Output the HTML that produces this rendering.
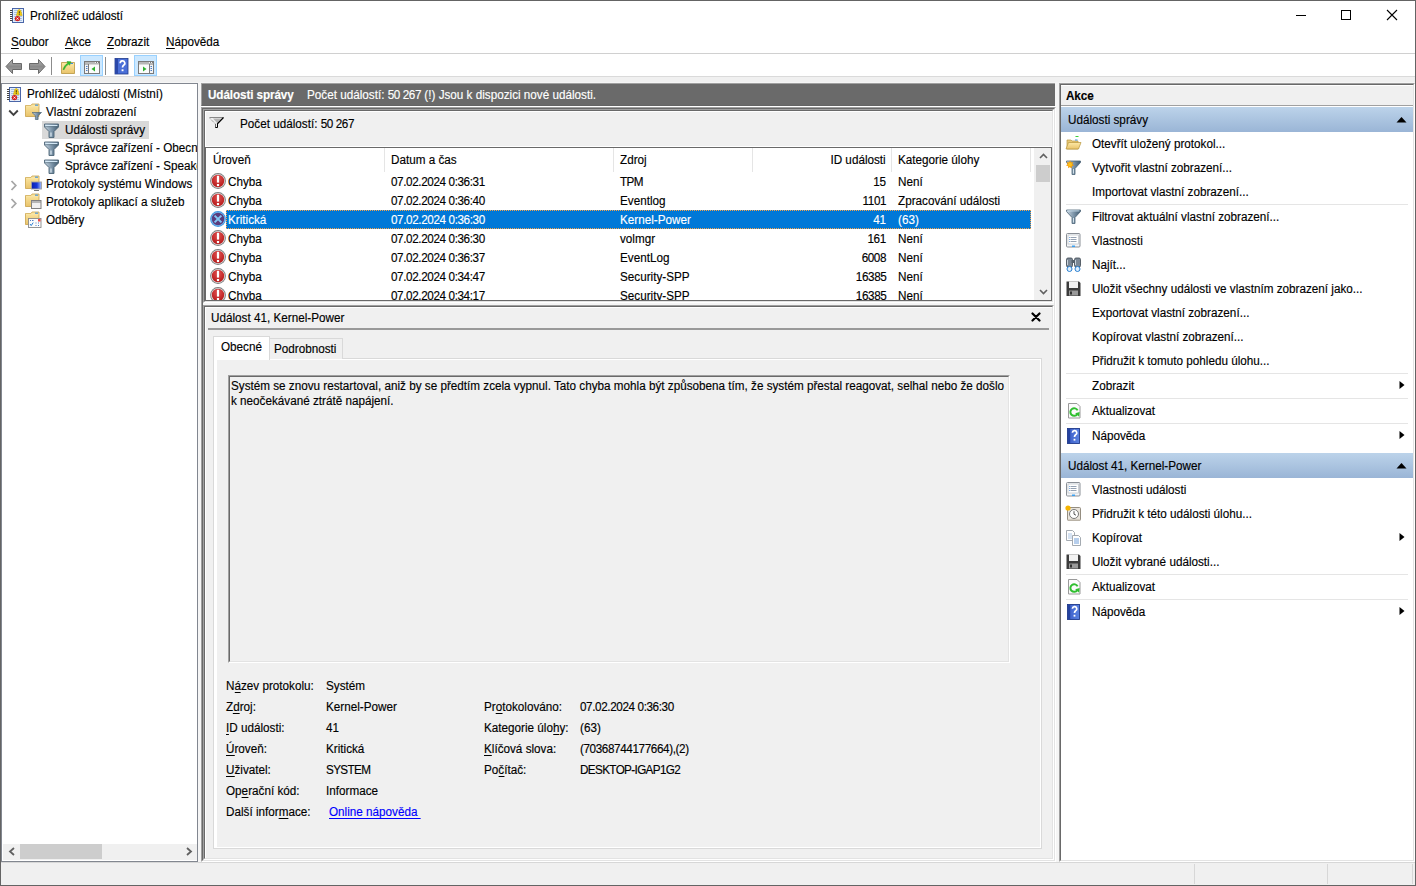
<!DOCTYPE html>
<html><head><meta charset="utf-8">
<style>
*{box-sizing:border-box}
html,body{margin:0;padding:0}
body{width:1416px;height:886px;position:relative;overflow:hidden;background:#fff;font-family:"Liberation Sans",sans-serif;font-size:12px;color:#000}
.a{position:absolute}
.t{position:absolute;white-space:nowrap;line-height:14px;-webkit-text-stroke:0.15px currentColor;transform:scaleX(0.975);transform-origin:0 0}
.t[style*="right:"]{transform-origin:100% 0}
.n{letter-spacing:-0.4px}
.u{letter-spacing:-0.65px}
.b{font-weight:bold;letter-spacing:-0.1px}
u{text-decoration:none;border-bottom:1px solid #000;display:inline-block;line-height:11px}
</style></head><body>
<svg width="0" height="0" style="position:absolute">
<defs>
<radialGradient id="gred" cx="50%" cy="30%" r="65%"><stop offset="0" stop-color="#e05050"/><stop offset="1" stop-color="#b81c1c"/></radialGradient>
<symbol id="ierr" viewBox="0 0 16 16"><circle cx="8" cy="8" r="7.9" fill="#7c7c7c"/><circle cx="8" cy="8" r="7" fill="#dcdcdc"/><circle cx="8" cy="8" r="6.2" fill="url(#gred)"/><rect x="6.9" y="2.8" width="2.2" height="6.8" fill="#fff"/><rect x="6.9" y="11" width="2.2" height="2.1" fill="#fff"/></symbol>
<symbol id="icrit" viewBox="0 0 16 16"><circle cx="8" cy="8" r="7.9" fill="#3f95e0"/><circle cx="8" cy="8" r="7" fill="#74b8ee"/><circle cx="8" cy="8" r="6.2" fill="#5a3c7c"/><path d="M4.6 4.6L11.4 11.4M11.4 4.6L4.6 11.4" stroke="#80c6f4" stroke-width="2"/></symbol>

<linearGradient id="gfold" x1="0" y1="0" x2="0" y2="1"><stop offset="0" stop-color="#fde9a6"/><stop offset="1" stop-color="#e9c36a"/></linearGradient>
<linearGradient id="gfun" x1="0" y1="0" x2="1" y2="0"><stop offset="0" stop-color="#c9d6e0"/><stop offset=".5" stop-color="#7f97ab"/><stop offset="1" stop-color="#3f5a70"/></linearGradient>
<symbol id="ifunnel" viewBox="0 0 15 15"><path d="M0.5 1H14.5V4L10 8.5V14.5H5V8.5L0.5 4Z" fill="url(#gfun)" stroke="#4d6577" stroke-width="0.9" stroke-linejoin="round"/><path d="M1.5 2.4H13.5" stroke="#d9ecfa" stroke-width="1.1"/><path d="M0.8 3.7H14.2" stroke="#5a7284" stroke-width="0.7"/><path d="M7 9.5V13.5" stroke="#eaf5fc" stroke-width="1.3" opacity=".8"/></symbol>
<symbol id="ifolder" viewBox="0 0 17 17"><path d="M0.5 2.5H6L7 1H14V13.5H0.5Z" fill="url(#gfold)" stroke="#c9a24a" stroke-width="0.8"/><path d="M1 3.3H13.5" stroke="#f9e6a8" stroke-width="0.8"/><rect x="10" y="1.6" width="3" height="1.1" fill="#3d8fe0"/></symbol>
<symbol id="ifoldfilt" viewBox="0 0 17 17"><use href="#ifolder"/><path d="M7 9.5h9.5l-3.4 3.2v3.8h-2.7v-3.8z" fill="url(#gfun)" stroke="#4d6577" stroke-width="0.7"/></symbol>
<symbol id="ifoldwin" viewBox="0 0 17 17"><defs><linearGradient id="gscr" x1="0" y1="0" x2="1" y2="0"><stop offset="0" stop-color="#0a1fb0"/><stop offset=".55" stop-color="#1838d8"/><stop offset="1" stop-color="#a8c4ff"/></linearGradient></defs><use href="#ifolder"/><rect x="6.5" y="7" width="10" height="7" fill="url(#gscr)" stroke="#a0a0a0" stroke-width="0.9"/><path d="M9 15.5h5" stroke="#777" stroke-width="1"/></symbol>
<symbol id="ifoldapp" viewBox="0 0 17 17"><use href="#ifolder"/><rect x="6.5" y="7.5" width="9.5" height="8" fill="#f0f0f0" stroke="#808080" stroke-width="1"/><path d="M6.5 9H16" stroke="#909090" stroke-width="1.2"/></symbol>
<symbol id="ifoldsub" viewBox="0 0 17 17"><use href="#ifolder"/><rect x="3.5" y="7.5" width="12.5" height="9" fill="#fbfbfb" stroke="#8a8a8a" stroke-width="0.9"/><rect x="13" y="8" width="2.5" height="2.5" fill="#f04848"/><path d="M5 13l1.2 1.6 2-3" stroke="#2a7fd4" stroke-width="1" fill="none"/><path d="M5 9.5h1M7 9.5h1.5M10.5 12h1M13 12h1M10.5 14.5h1M13 14.5h1" stroke="#3a6fc0" stroke-width="0.9"/></symbol>
<symbol id="ilog" viewBox="0 0 15 16"><rect x="2.5" y="0.5" width="11" height="14" fill="#e4eefa" stroke="#4a66a8" stroke-width="1"/><path d="M4 2.5h8M4 4.5h8M4 6.5h8M4 8.5h8M4 10.5h8M4 12.5h8" stroke="#a9c3e6" stroke-width="1"/><path d="M0 2.5h2.5M0 4.5h2.5M0 6.5h2.5M0 8.5h2.5M0 10.5h2.5M0 12.5h2.5" stroke="#444" stroke-width="1"/><path d="M9.3 1.5c-1.2 0-1.6 1.2-1.9 2.6l-1 3.4h5.8l-1-3.4c-0.3-1.4-0.7-2.6-1.9-2.6z" fill="#f2cc14" stroke="#c9a000" stroke-width="0.5"/><path d="M9.3 3.2v2.3M9.3 6.2v0.8" stroke="#222" stroke-width="0.9"/><circle cx="7.5" cy="10.6" r="2.7" fill="#d42020"/><path d="M6.5 9.6l2 2M8.5 9.6l-2 2" stroke="#fff" stroke-width="0.9"/></symbol>

<linearGradient id="gfun2" x1="0" y1="0" x2="1" y2="1"><stop offset="0" stop-color="#e6eef4"/><stop offset=".6" stop-color="#7f97ab"/><stop offset="1" stop-color="#3f5a70"/></linearGradient>
<symbol id="ifunnel2" viewBox="0 0 17 17"><path d="M1.5 1H15.5V2.5L10 8.5V14.5H7V8.5L1.5 2.5Z" fill="url(#gfun)" stroke="#4d6577" stroke-width="0.8" stroke-linejoin="round"/><path d="M2.5 1.9H14.5" stroke="#d9ecfa" stroke-width="0.9"/><path d="M8.5 9V13.5" stroke="#eaf5fc" stroke-width="1" opacity=".8"/></symbol>
<symbol id="ifunsun" viewBox="0 0 17 17"><path d="M1.5 1H15.5V2.5L10 8.5V14.5H7V8.5L1.5 2.5Z" fill="url(#gfun)" stroke="#4d6577" stroke-width="0.8" stroke-linejoin="round"/><path d="M8.5 9V13.5" stroke="#eaf5fc" stroke-width="1" opacity=".8"/><path d="M5 0.5L6 2.5L8.2 2L7.3 4L9 5.5L6.8 6L6.8 8.2L5 7L3.2 8.2L3.2 6L1 5.5L2.7 4L1.8 2L4 2.5Z" fill="#f59a00"/><circle cx="5" cy="4.4" r="2" fill="#ffc21a"/></symbol>
<symbol id="iopen" viewBox="0 0 17 17"><path d="M10.5 1.5h3" stroke="#3ad13a" stroke-width="1"/><path d="M2 5h4l1 1h6v8h-11z" fill="#e8c878" stroke="#b8963e" stroke-width="0.7"/><path d="M1 14l2.5-6.5h12.5l-2.5 6.5z" fill="url(#gfold)" stroke="#b8963e" stroke-width="0.7"/><rect x="10" y="4.5" width="2.5" height="1" fill="#3d8fe0"/></symbol>
<symbol id="iprops" viewBox="0 0 17 17"><rect x="1.5" y="1.5" width="13.5" height="13.5" rx="1" fill="#f4f6f8" stroke="#8a8f96" stroke-width="1"/><rect x="3" y="3" width="10.5" height="9" fill="#fff" stroke="#b0b6bd" stroke-width="0.6"/><path d="M5.5 5.5h6M5.5 7.5h6M5.5 9.5h6" stroke="#7a8aa0" stroke-width="0.8"/><path d="M4 5.5h0.8M4 7.5h0.8M4 9.5h0.8" stroke="#3a7fd0" stroke-width="0.8"/><rect x="7" y="13.5" width="3" height="1.5" fill="#3aa0f0"/></symbol>
<symbol id="ifind" viewBox="0 0 17 17"><rect x="1.5" y="2" width="6" height="9" rx="1.5" fill="#7b8794" stroke="#3d4650" stroke-width="0.8"/><rect x="9.5" y="2" width="6" height="9" rx="1.5" fill="#7b8794" stroke="#3d4650" stroke-width="0.8"/><rect x="6.5" y="4" width="4" height="3" fill="#55606b"/><circle cx="4.5" cy="13" r="2.5" fill="#dff0ff" stroke="#2a7fd0" stroke-width="1"/><circle cx="12.5" cy="13" r="2.5" fill="#dff0ff" stroke="#2a7fd0" stroke-width="1"/><path d="M2.5 4v5M10.5 4v5" stroke="#c9d2da" stroke-width="1"/></symbol>
<symbol id="isave" viewBox="0 0 17 17"><path d="M1.5 1.5h12.5l1.5 1.5v13h-14z" fill="#3c3c3c"/><rect x="4" y="1.5" width="9" height="6.5" fill="#f2f2f2"/><rect x="4" y="10.5" width="9" height="5" fill="#9a9a9a"/><rect x="5" y="11.5" width="2" height="3" fill="#333"/></symbol>
<symbol id="irefresh" viewBox="0 0 17 17"><path d="M3.5 1.5h8.5l3 3v11.5h-11.5z" fill="#fbfbfb" stroke="#9a9a9a" stroke-width="1"/><path d="M12.3 12.2A3.8 3.8 0 1 1 12.6 8.4" stroke="#2fbf2f" stroke-width="2" fill="none"/><path d="M10.2 11.2L14.2 14.8L14.6 10z" fill="#2fbf2f"/></symbol>
<symbol id="ihelp" viewBox="0 0 17 17"><defs><linearGradient id="ghelp" x1="0" y1="0" x2="1" y2="0"><stop offset="0" stop-color="#3a5cc8"/><stop offset="1" stop-color="#5a82e0"/></linearGradient></defs><rect x="2.5" y="1.5" width="12" height="15" fill="url(#ghelp)" stroke="#1f3a8a" stroke-width="0.9"/><rect x="3" y="2" width="2.2" height="14" fill="#2442a0"/><path d="M7.4 5.8a2.2 2.2 0 1 1 3.2 2c-0.9 0.6-1.1 1.1-1.1 2.3" stroke="#fff" stroke-width="1.7" fill="none"/><rect x="8.6" y="11.8" width="1.8" height="1.8" fill="#fff"/></symbol>
<symbol id="itask" viewBox="0 0 17 17"><rect x="2.5" y="2.5" width="13" height="13" rx="1" fill="#e9e4dc" stroke="#8a8275" stroke-width="0.9"/><circle cx="9" cy="9" r="4.5" fill="#fff" stroke="#6a6a6a" stroke-width="0.9"/><path d="M9 6.2v3l2 1" stroke="#444" stroke-width="0.9" fill="none"/><circle cx="3" cy="3" r="2.6" fill="#f5b400"/><rect x="3" y="14.5" width="12" height="1.5" fill="#b9b2a6"/></symbol>
<symbol id="icopy" viewBox="0 0 17 17"><path d="M1.5 1.5h6l2 2v8h-8z" fill="#fff" stroke="#9aa0a8" stroke-width="0.9"/><path d="M3 5h4M3 7h4M3 9h4" stroke="#8ab0dc" stroke-width="0.7"/><path d="M7.5 6.5h6l2 2v8h-8z" fill="#fff" stroke="#9aa0a8" stroke-width="0.9"/><path d="M9 10h5M9 12h5M9 14h5" stroke="#4a86d0" stroke-width="0.8"/></symbol>
</defs></svg>
<!-- window border -->
<div class="a" style="left:0;top:0;width:1416px;height:886px;border:1px solid #646464"></div>

<!-- title bar -->
<svg class="a" style="left:10px;top:8px" width="15" height="16"><use href="#ilog"/></svg>
<div class="t" style="left:30px;top:9px">Prohlížeč událostí</div>
<!-- window controls -->
<div class="a" style="left:1296px;top:15px;width:10px;height:1px;background:#000"></div>
<div class="a" style="left:1341px;top:10px;width:10px;height:10px;border:1px solid #000"></div>
<svg class="a" style="left:1386px;top:9px" width="12" height="12"><path d="M1 1L11 11M11 1L1 11" stroke="#000" stroke-width="1.1"/></svg>

<!-- menu -->
<div class="t" style="left:11px;top:35px"><u>S</u>oubor</div>
<div class="t" style="left:65px;top:35px"><u>A</u>kce</div>
<div class="t" style="left:107px;top:35px"><u>Z</u>obrazit</div>
<div class="t" style="left:166px;top:35px"><u>N</u>ápověda</div>
<div class="a" style="left:1px;top:53px;width:1414px;height:1px;background:#d0d0d0"></div>
<!-- toolbar -->
<div class="a" style="left:1px;top:76px;width:1414px;height:1px;background:#dadada"></div>
<div class="a" style="left:1px;top:77px;width:1414px;height:785px;background:#f0f0f0"></div>
<div class="a" style="left:1px;top:82px;width:1414px;height:780px;background:#f5f5f5"></div>

<!-- toolbar icons -->
<svg class="a" style="left:5px;top:58px" width="18" height="18"><defs><linearGradient id="garr" x1="0" y1="0" x2="0" y2="1"><stop offset="0" stop-color="#b8b8b8"/><stop offset=".5" stop-color="#8a8a8a"/><stop offset="1" stop-color="#a8a8a8"/></linearGradient></defs><path d="M1 8.5L7.5 1.5V5.5H16.5V11.5H7.5V15.5z" fill="url(#garr)" stroke="#6a6a6a" stroke-width="1" stroke-linejoin="round"/></svg>
<svg class="a" style="left:28px;top:58px" width="18" height="18"><path d="M17 8.5L10.5 1.5V5.5H1.5V11.5H10.5V15.5z" fill="url(#garr)" stroke="#6a6a6a" stroke-width="1" stroke-linejoin="round"/></svg>
<div class="a" style="left:51px;top:57px;width:1px;height:18px;background:#8c8c8c"></div>
<svg class="a" style="left:60px;top:58px" width="17" height="17"><path d="M1.5 4.5h13v11h-13z" fill="url(#gfold)" stroke="#b8963e" stroke-width="0.8"/><rect x="10.5" y="5" width="2.5" height="1" fill="#3d8fe0"/><path d="M3 11.5c1-3 2.5-5 5-6.5l-1-1.5 4 0.3-1.5 3.5-0.8-1.2c-2 1.2-3.5 3-4.5 5.5z" fill="#2ec42e" stroke="#1f9a1f" stroke-width="0.5"/></svg>
<div class="a" style="left:80px;top:55px;width:23px;height:21px;background:#cce8ff;border:1px solid #99d1ff"></div>
<svg class="a" style="left:83px;top:60px" width="17" height="15"><rect x="1.5" y="1.5" width="15" height="12" fill="#f4f4f4" stroke="#7a7a7a" stroke-width="1"/><path d="M1.5 4h15" stroke="#7a7a7a" stroke-width="1"/><path d="M2 2.5h10" stroke="#a8a8a8" stroke-width="0.8"/><rect x="13" y="2" width="1" height="1" fill="#7a7a7a"/><rect x="15" y="2" width="1" height="1" fill="#7a7a7a"/><path d="M5.5 4v9.5" stroke="#7a7a7a" stroke-width="1"/><path d="M3 6.5h1.5M3 8.5h1.5M3 10.5h1.5" stroke="#3a6fc0" stroke-width="0.9"/><rect x="6" y="4.5" width="10" height="8.5" fill="#fbfbfb"/><path d="M12 6.5v5l-3.5-2.5z" fill="#2fb12f"/></svg>
<div class="a" style="left:105px;top:57px;width:1px;height:18px;background:#8c8c8c"></div>
<svg class="a" style="left:114px;top:58px" width="15" height="17"><rect x="1" y="0.5" width="13" height="15.5" fill="#4a6fd8" stroke="#1f3a8a" stroke-width="0.8"/><rect x="1" y="0.5" width="3" height="15.5" fill="#2a47a8"/><path d="M6.2 5.2a2.3 2.3 0 1 1 3.4 2c-0.9 0.6-1.1 1.1-1.1 2.3" stroke="#fff" stroke-width="1.7" fill="none"/><rect x="7.6" y="11.3" width="1.9" height="1.9" fill="#fff"/></svg>
<div class="a" style="left:134px;top:55px;width:23px;height:21px;background:#cce8ff;border:1px solid #99d1ff"></div>
<svg class="a" style="left:137px;top:60px" width="17" height="15"><rect x="1.5" y="1.5" width="15" height="12" fill="#f4f4f4" stroke="#7a7a7a" stroke-width="1"/><path d="M1.5 4h15" stroke="#7a7a7a" stroke-width="1"/><path d="M2 2.5h10" stroke="#a8a8a8" stroke-width="0.8"/><rect x="13" y="2" width="1" height="1" fill="#7a7a7a"/><rect x="15" y="2" width="1" height="1" fill="#7a7a7a"/><rect x="2" y="4.5" width="10" height="8.5" fill="#fbfbfb"/><path d="M12.5 4v9.5" stroke="#7a7a7a" stroke-width="1"/><path d="M13.5 6.5h1.5M13.5 8.5h1.5M13.5 10.5h1.5" stroke="#3a6fc0" stroke-width="0.9"/><path d="M6 6.5v5l3.5-2.5z" fill="#2fb12f"/></svg>
<!-- status bar -->
<div class="a" style="left:1px;top:862px;width:1414px;height:23px;background:#f0f0f0;border-top:1px solid #d7d7d7"></div>
<div class="a" style="left:1194px;top:864px;width:1px;height:20px;background:#d7d7d7"></div>
<div class="a" style="left:1327px;top:864px;width:1px;height:20px;background:#d7d7d7"></div>
<div class="a" style="left:1412px;top:864px;width:1px;height:20px;background:#d7d7d7"></div>

<!-- LEFT PANEL -->
<div class="a" id="left" style="left:1px;top:83px;width:197px;height:779px;background:#fff;border:1px solid #828790;overflow:hidden">
<div class="a" style="left:-1px;top:-1px;width:196px;height:777px">
<svg class="a" style="left:6px;top:4px" width="15" height="16"><use href="#ilog"/></svg>
<div class="t" style="left:26px;top:4px">Prohlížeč událostí (Místní)</div>
<svg class="a" style="left:7px;top:26px" width="11" height="8"><path d="M1.2 1.5L5.5 5.8L9.8 1.5" stroke="#404040" stroke-width="1.9" fill="none"/></svg>
<svg class="a" style="left:24px;top:20px" width="17" height="17"><use href="#ifoldfilt"/></svg>
<div class="t" style="left:45px;top:22px">Vlastní zobrazení</div>
<div class="a" style="left:41px;top:38px;width:107px;height:18px;background:#d9d9d9"></div>
<svg class="a" style="left:43px;top:40px" width="15" height="15"><use href="#ifunnel"/></svg>
<div class="t" style="left:64px;top:40px">Události správy</div>
<svg class="a" style="left:43px;top:58px" width="15" height="15"><use href="#ifunnel"/></svg>
<div class="t" style="left:64px;top:58px">Správce zařízení - Obecný</div>
<svg class="a" style="left:43px;top:76px" width="15" height="15"><use href="#ifunnel"/></svg>
<div class="t" style="left:64px;top:76px">Správce zařízení - Speaker</div>
<svg class="a" style="left:9px;top:97px" width="7" height="11"><path d="M1.5 1L5.8 5.5L1.5 10" stroke="#a6a6a6" stroke-width="1.8" fill="none"/></svg>
<svg class="a" style="left:24px;top:92px" width="17" height="17"><use href="#ifoldwin"/></svg>
<div class="t" style="left:45px;top:94px">Protokoly systému Windows</div>
<svg class="a" style="left:9px;top:115px" width="7" height="11"><path d="M1.5 1L5.8 5.5L1.5 10" stroke="#a6a6a6" stroke-width="1.8" fill="none"/></svg>
<svg class="a" style="left:24px;top:110px" width="17" height="17"><use href="#ifoldapp"/></svg>
<div class="t" style="left:45px;top:112px">Protokoly aplikací a služeb</div>
<svg class="a" style="left:24px;top:128px" width="17" height="17"><use href="#ifoldsub"/></svg>
<div class="t" style="left:45px;top:130px">Odběry</div>
</div>
<!-- h scrollbar -->
<div class="a" style="left:1px;top:760px;width:194px;height:16px;background:#f0f0f0"></div>
<div class="a" style="left:18px;top:760px;width:82px;height:15px;background:#cdcdcd"></div>
<svg class="a" style="left:6px;top:763px" width="8" height="9"><path d="M6 1L2 4.5L6 8" stroke="#606060" stroke-width="1.8" fill="none"/></svg>
<svg class="a" style="left:183px;top:763px" width="8" height="9"><path d="M2 1L6 4.5L2 8" stroke="#606060" stroke-width="1.8" fill="none"/></svg>
</div>


<!-- MIDDLE PANEL -->
<div class="a" style="left:201px;top:83px;width:854px;height:23px;background:#6a6a6a;border-bottom:1px solid #646464;border-top:1px solid #a0a0a0;border-left:1px solid #a0a0a0"></div>
<div class="t b" style="left:208px;top:88px;color:#fff">Události správy</div>
<div class="t" style="left:307px;top:88px;color:#fff">Počet událostí: <span class="n">50 267</span> (!) Jsou k dispozici nové události.</div>
<div class="a" style="left:201px;top:106px;width:855px;height:1px;background:#fff"></div>
<!-- outer sunken frame -->
<div class="a" style="left:201px;top:107px;width:855px;height:755px;border-style:solid;border-width:1px;border-color:#a0a0a0 #fff #fff #a0a0a0">
 <div style="width:100%;height:100%;border-style:solid;border-width:1px;border-color:#696969 #e3e3e3 #e3e3e3 #696969"></div>
</div>
<!-- upper inner frame -->
<div class="a" style="left:203px;top:109px;width:851px;height:194px;border-style:solid;border-width:1px;border-color:#a0a0a0 #fff #fff #a0a0a0">
 <div style="width:100%;height:100%;border-style:solid;border-width:1px;border-color:#696969 #e3e3e3 #e3e3e3 #696969;background:#f0f0f0"></div>
</div>
<!-- filter strip highlight -->
<div class="a" style="left:205px;top:111px;width:847px;height:36px;border-style:solid;border-width:1px 0 1px 1px;border-color:#fff"></div>
<svg class="a" style="left:209px;top:116px" width="16" height="13"><path d="M4 2.5H12L8.2 7z" fill="#b5b5b5"/><path d="M0.5 1.5H14.5" stroke="#888" stroke-width="1"/><path d="M1 2.5L6.5 8" stroke="#777" stroke-width="1" stroke-dasharray="1 1"/><path d="M14.5 1.5L8.2 8" stroke="#000" stroke-width="1.2"/><path d="M6.5 8V11.5H8.5V8" stroke="#000" stroke-width="1" fill="none"/><path d="M6.5 8V11" stroke="#666" stroke-width="1"/></svg>
<div class="t" style="left:240px;top:117px">Počet událostí: <span class="n">50 267</span></div>
<!-- listview -->
<div class="a" id="lv" style="left:205px;top:147px;width:847px;height:154px;background:#fff;border:1px solid #696969;overflow:hidden"><div class="a" style="left:178px;top:0;width:1px;height:24px;background:#e5e5e5"></div>
<div class="a" style="left:407px;top:0;width:1px;height:24px;background:#e5e5e5"></div>
<div class="a" style="left:546px;top:0;width:1px;height:24px;background:#e5e5e5"></div>
<div class="a" style="left:685px;top:0;width:1px;height:24px;background:#e5e5e5"></div>
<div class="a" style="left:824px;top:0;width:1px;height:24px;background:#e5e5e5"></div>
<div class="t" style="left:7px;top:5px;">Úroveň</div>
<div class="t" style="left:185px;top:5px;">Datum a čas</div>
<div class="t" style="left:414px;top:5px;">Zdroj</div>
<div class="t" style="right:165px;top:5px">ID události</div>
<div class="t" style="left:692px;top:5px;">Kategorie úlohy</div>
<svg class="a" style="left:4px;top:25px" width="16" height="16"><use href="#ierr"/></svg>
<div class="t" style="left:22px;top:27px;">Chyba</div>
<div class="t" style="left:185px;top:27px;"><span class="n">07.02.2024 0:36:31</span></div>
<div class="t" style="left:414px;top:27px;"><span class="u">TPM</span></div>
<div class="t" style="right:165px;top:27px;"><span class="n">15</span></div>
<div class="t" style="left:692px;top:27px;">Není</div>
<svg class="a" style="left:4px;top:44px" width="16" height="16"><use href="#ierr"/></svg>
<div class="t" style="left:22px;top:46px;">Chyba</div>
<div class="t" style="left:185px;top:46px;"><span class="n">07.02.2024 0:36:40</span></div>
<div class="t" style="left:414px;top:46px;">Eventlog</div>
<div class="t" style="right:165px;top:46px;"><span class="n">1101</span></div>
<div class="t" style="left:692px;top:46px;">Zpracování události</div>
<div class="a" style="left:20px;top:62px;width:805px;height:19px;background:#0078d7;outline:1px dotted #f7a34a;outline-offset:-1px"></div>
<svg class="a" style="left:4px;top:63px" width="16" height="16"><use href="#icrit"/></svg>
<div class="t" style="left:22px;top:65px;color:#fff">Kritická</div>
<div class="t" style="left:185px;top:65px;color:#fff"><span class="n">07.02.2024 0:36:30</span></div>
<div class="t" style="left:414px;top:65px;color:#fff">Kernel-Power</div>
<div class="t" style="right:165px;top:65px;color:#fff"><span class="n">41</span></div>
<div class="t" style="left:692px;top:65px;color:#fff">(63)</div>
<svg class="a" style="left:4px;top:82px" width="16" height="16"><use href="#ierr"/></svg>
<div class="t" style="left:22px;top:84px;">Chyba</div>
<div class="t" style="left:185px;top:84px;"><span class="n">07.02.2024 0:36:30</span></div>
<div class="t" style="left:414px;top:84px;">volmgr</div>
<div class="t" style="right:165px;top:84px;"><span class="n">161</span></div>
<div class="t" style="left:692px;top:84px;">Není</div>
<svg class="a" style="left:4px;top:101px" width="16" height="16"><use href="#ierr"/></svg>
<div class="t" style="left:22px;top:103px;">Chyba</div>
<div class="t" style="left:185px;top:103px;"><span class="n">07.02.2024 0:36:37</span></div>
<div class="t" style="left:414px;top:103px;">EventLog</div>
<div class="t" style="right:165px;top:103px;"><span class="n">6008</span></div>
<div class="t" style="left:692px;top:103px;">Není</div>
<svg class="a" style="left:4px;top:120px" width="16" height="16"><use href="#ierr"/></svg>
<div class="t" style="left:22px;top:122px;">Chyba</div>
<div class="t" style="left:185px;top:122px;"><span class="n">07.02.2024 0:34:47</span></div>
<div class="t" style="left:414px;top:122px;">Security-SPP</div>
<div class="t" style="right:165px;top:122px;"><span class="n">16385</span></div>
<div class="t" style="left:692px;top:122px;">Není</div>
<svg class="a" style="left:4px;top:139px" width="16" height="16"><use href="#ierr"/></svg>
<div class="t" style="left:22px;top:141px;">Chyba</div>
<div class="t" style="left:185px;top:141px;"><span class="n">07.02.2024 0:34:17</span></div>
<div class="t" style="left:414px;top:141px;">Security-SPP</div>
<div class="t" style="right:165px;top:141px;"><span class="n">16385</span></div>
<div class="t" style="left:692px;top:141px;">Není</div>
<div class="a" style="left:828px;top:0;width:17px;height:152px;background:#f0f0f0"></div>
<div class="a" style="left:830px;top:17px;width:14px;height:17px;background:#cdcdcd"></div>
<svg class="a" style="left:833px;top:5px" width="9" height="6"><path d="M1 5L4.5 1.5L8 5" stroke="#606060" stroke-width="1.6" fill="none"/></svg>
<svg class="a" style="left:833px;top:141px" width="9" height="6"><path d="M1 1L4.5 4.5L8 1" stroke="#606060" stroke-width="1.6" fill="none"/></svg></div>
<!-- lower inner frame -->
<div class="a" style="left:203px;top:305px;width:851px;height:555px;border-style:solid;border-width:1px;border-color:#a0a0a0 #fff #fff #a0a0a0">
 <div style="width:100%;height:100%;border-style:solid;border-width:1px;border-color:#696969 #e3e3e3 #e3e3e3 #696969;background:#f0f0f0"></div>
</div>
<div class="a" style="left:205px;top:307px;width:847px;height:551px;border-style:solid;border-width:1px 0 0 1px;border-color:#fff"></div>
<div class="t" style="left:211px;top:311px">Událost 41, Kernel-Power</div>
<svg class="a" style="left:1031px;top:312px" width="10" height="10"><path d="M1.5 1.5L8.5 8.5M8.5 1.5L1.5 8.5" stroke="#000" stroke-width="2.2" stroke-linecap="round"/></svg>
<div class="a" style="left:208px;top:328px;width:841px;height:2px;background:#999"></div>
<!-- tabs -->
<div class="a" style="left:213px;top:358px;width:829px;height:491px;background:#fff;border:1px solid #d9d9d9"></div>
<div class="a" style="left:217px;top:360px;width:823px;height:487px;background:#f0f0f0"></div>
<div class="a" style="left:269px;top:338px;width:74px;height:21px;background:#f0f0f0;border:1px solid #d9d9d9;border-bottom:none"></div>
<div class="a" style="left:213px;top:336px;width:57px;height:24px;background:#fff;border:1px solid #d9d9d9;border-bottom:none"></div>
<div class="t" style="left:221px;top:340px">Obecné</div>
<div class="t" style="left:274px;top:342px">Podrobnosti</div>
<!-- textbox -->
<div class="a" style="left:228px;top:375px;width:782px;height:288px;border-style:solid;border-width:1px;border-color:#a0a0a0 #fff #fff #a0a0a0">
 <div style="width:100%;height:100%;border-style:solid;border-width:1px;border-color:#696969 #e3e3e3 #e3e3e3 #696969"></div>
</div>
<div class="t" style="left:231px;top:379px">Systém se znovu restartoval, aniž by se předtím zcela vypnul. Tato chyba mohla být způsobena tím, že systém přestal reagovat, selhal nebo že došlo</div>
<div class="t" style="left:231px;top:394px">k neočekávané ztrátě napájení.</div>
<!-- properties -->
<div class="t" style="left:226px;top:679px">N<u>á</u>zev protokolu:</div>
<div class="t" style="left:326px;top:679px">Systém</div>
<div class="t" style="left:226px;top:700px">Z<u>d</u>roj:</div>
<div class="t" style="left:326px;top:700px">Kernel-Power</div>
<div class="t" style="left:226px;top:721px"><u>I</u>D události:</div>
<div class="t" style="left:326px;top:721px">41</div>
<div class="t" style="left:226px;top:742px"><u>Ú</u>roveň:</div>
<div class="t" style="left:326px;top:742px">Kritická</div>
<div class="t" style="left:226px;top:763px"><u>U</u>živatel:</div>
<div class="t" style="left:326px;top:763px"><span class="u">SYSTEM</span></div>
<div class="t" style="left:226px;top:784px">Op<u>e</u>rační kód:</div>
<div class="t" style="left:326px;top:784px">Informace</div>
<div class="t" style="left:226px;top:805px">Další infor<u>m</u>ace:</div>
<div class="t" style="left:329px;top:805px;color:#0000ff"><u style="border-color:#0000ff">Online nápověda&nbsp;</u></div>
<div class="t" style="left:484px;top:700px">Pr<u>o</u>tokolováno:</div>
<div class="t" style="left:580px;top:700px"><span class="n">07.02.2024 0:36:30</span></div>
<div class="t" style="left:484px;top:721px">Kategorie úlo<u>h</u>y:</div>
<div class="t" style="left:580px;top:721px">(63)</div>
<div class="t" style="left:484px;top:742px"><u>K</u>líčová slova:</div>
<div class="t" style="left:580px;top:742px"><span class="n">(70368744177664),(2)</span></div>
<div class="t" style="left:484px;top:763px">Po<u>č</u>ítač:</div>
<div class="t" style="left:580px;top:763px"><span class="u">DESKTOP-IGAP1G2</span></div>


<!-- RIGHT PANEL -->
<div class="a" style="left:1059px;top:83px;width:356px;height:779px;border-style:solid;border-width:1px;border-color:#a0a0a0 #fff #fff #a0a0a0">
 <div style="width:100%;height:100%;border-style:solid;border-width:1px;border-color:#696969 #e3e3e3 #e3e3e3 #696969;background:#fff;position:relative;overflow:hidden"><div class="a" style="left:0;top:0;width:352px;height:20px;background:#f0f0f0;border-top:1px solid #fff"></div>
<div class="t b" style="left:5px;top:4px">Akce</div>
<div class="a" style="left:0;top:20px;width:352px;height:1px;background:#a0a0a0"></div>
<div class="a" style="left:0;top:22px;width:352px;height:25px;background:linear-gradient(#bcd3ea,#9ab5d6)"></div>
<div class="t" style="left:7px;top:28px">Události správy</div>
<svg class="a" style="left:335px;top:31px" width="11" height="7"><path d="M0.5 6.5L5.5 1L10.5 6.5z" fill="#000"/></svg>
<svg class="a" style="left:4px;top:50px" width="17" height="17"><use href="#iopen"/></svg>
<div class="t" style="left:31px;top:52px">Otevřít uložený protokol...</div>
<svg class="a" style="left:4px;top:75px" width="17" height="17"><use href="#ifunsun"/></svg>
<div class="t" style="left:31px;top:76px">Vytvořit vlastní zobrazení...</div>
<div class="t" style="left:31px;top:100px">Importovat vlastní zobrazení...</div>
<div class="a" style="left:5px;top:119px;width:342px;height:1px;background:#e5e5e5"></div>
<svg class="a" style="left:4px;top:124px" width="17" height="17"><use href="#ifunnel2"/></svg>
<div class="t" style="left:31px;top:125px">Filtrovat aktuální vlastní zobrazení...</div>
<svg class="a" style="left:4px;top:147px" width="17" height="17"><use href="#iprops"/></svg>
<div class="t" style="left:31px;top:149px">Vlastnosti</div>
<svg class="a" style="left:4px;top:171px" width="17" height="17"><use href="#ifind"/></svg>
<div class="t" style="left:31px;top:173px">Najít...</div>
<svg class="a" style="left:4px;top:195px" width="17" height="17"><use href="#isave"/></svg>
<div class="t" style="left:31px;top:197px">Uložit všechny události ve vlastním zobrazení jako...</div>
<div class="t" style="left:31px;top:221px">Exportovat vlastní zobrazení...</div>
<div class="t" style="left:31px;top:245px">Kopírovat vlastní zobrazení...</div>
<div class="t" style="left:31px;top:269px">Přidružit k tomuto pohledu úlohu...</div>
<div class="a" style="left:5px;top:288px;width:342px;height:1px;background:#e5e5e5"></div>
<div class="t" style="left:31px;top:294px">Zobrazit</div>
<svg class="a" style="left:337px;top:295px" width="8" height="10"><path d="M1.5 1L6.5 5L1.5 9z" fill="#000"/></svg>
<div class="a" style="left:5px;top:313px;width:342px;height:1px;background:#e5e5e5"></div>
<svg class="a" style="left:4px;top:317px" width="17" height="17"><use href="#irefresh"/></svg>
<div class="t" style="left:31px;top:319px">Aktualizovat</div>
<div class="a" style="left:5px;top:338px;width:342px;height:1px;background:#e5e5e5"></div>
<svg class="a" style="left:4px;top:342px" width="17" height="17"><use href="#ihelp"/></svg>
<div class="t" style="left:31px;top:344px">Nápověda</div>
<svg class="a" style="left:337px;top:345px" width="8" height="10"><path d="M1.5 1L6.5 5L1.5 9z" fill="#000"/></svg>
<div class="a" style="left:0;top:368px;width:352px;height:25px;background:linear-gradient(#bcd3ea,#9ab5d6)"></div>
<div class="t" style="left:7px;top:374px">Událost 41, Kernel-Power</div>
<svg class="a" style="left:335px;top:377px" width="11" height="7"><path d="M0.5 6.5L5.5 1L10.5 6.5z" fill="#000"/></svg>
<svg class="a" style="left:4px;top:396px" width="17" height="17"><use href="#iprops"/></svg>
<div class="t" style="left:31px;top:398px">Vlastnosti události</div>
<svg class="a" style="left:4px;top:420px" width="17" height="17"><use href="#itask"/></svg>
<div class="t" style="left:31px;top:422px">Přidružit k této události úlohu...</div>
<svg class="a" style="left:4px;top:444px" width="17" height="17"><use href="#icopy"/></svg>
<div class="t" style="left:31px;top:446px">Kopírovat</div>
<svg class="a" style="left:337px;top:447px" width="8" height="10"><path d="M1.5 1L6.5 5L1.5 9z" fill="#000"/></svg>
<svg class="a" style="left:4px;top:468px" width="17" height="17"><use href="#isave"/></svg>
<div class="t" style="left:31px;top:470px">Uložit vybrané události...</div>
<div class="a" style="left:5px;top:489px;width:342px;height:1px;background:#e5e5e5"></div>
<svg class="a" style="left:4px;top:493px" width="17" height="17"><use href="#irefresh"/></svg>
<div class="t" style="left:31px;top:495px">Aktualizovat</div>
<div class="a" style="left:5px;top:514px;width:342px;height:1px;background:#e5e5e5"></div>
<svg class="a" style="left:4px;top:518px" width="17" height="17"><use href="#ihelp"/></svg>
<div class="t" style="left:31px;top:520px">Nápověda</div>
<svg class="a" style="left:337px;top:521px" width="8" height="10"><path d="M1.5 1L6.5 5L1.5 9z" fill="#000"/></svg></div></div>

</body></html>
